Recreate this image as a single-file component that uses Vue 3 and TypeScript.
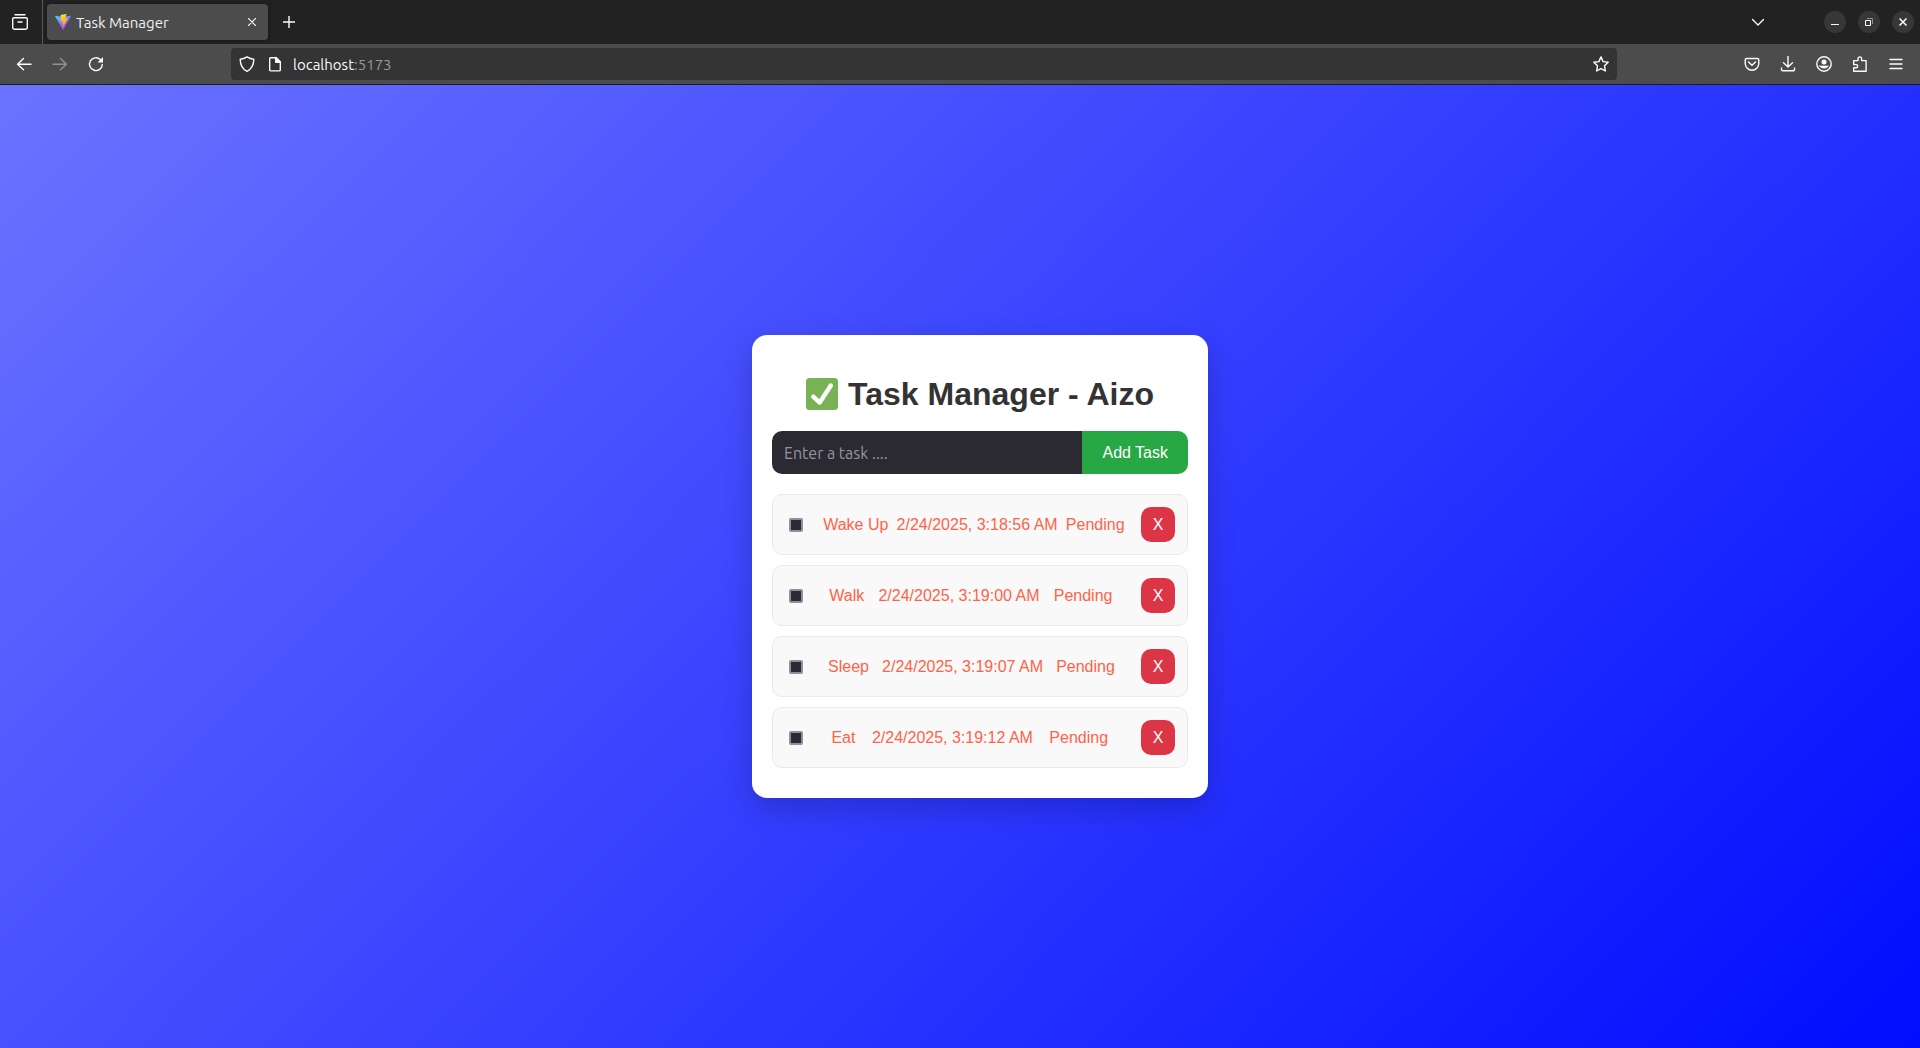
<script setup lang="ts">
import { ref } from 'vue'

interface Task {
  id: number
  text: string
  time: string
  done: boolean
}

const draft = ref('')
const tasks = ref<Task[]>([
  { id: 1, text: 'Wake Up', time: '2/24/2025, 3:18:56 AM', done: false },
  { id: 2, text: 'Walk', time: '2/24/2025, 3:19:00 AM', done: false },
  { id: 3, text: 'Sleep', time: '2/24/2025, 3:19:07 AM', done: false },
  { id: 4, text: 'Eat', time: '2/24/2025, 3:19:12 AM', done: false },
])

function addTask(): void {
  const text = draft.value.trim()
  if (!text) return
  tasks.value.push({ id: Date.now(), text, time: new Date().toLocaleString('en-US'), done: false })
  draft.value = ''
}

function removeTask(id: number): void {
  tasks.value = tasks.value.filter((task) => task.id !== id)
}
</script>

<template>
  <div class="window">
    <header class="chrome">
      <div class="tabs">
        <button class="view" type="button" aria-label="Recent browsing">
          <svg class="icon" viewBox="0 0 16 16">
            <path d="M3 .8h10" />
            <path d="M2 3.7h12a1.3 1.3 0 0 1 1.3 1.3v8.5a1.8 1.8 0 0 1-1.8 1.8h-11A1.8 1.8 0 0 1 .7 13.500V5A1.300 1.300 0 0 1 2 3.700z" />
            <path d="M6 8h4" />
          </svg>
        </button>
        <div class="tab">
          <svg class="icon" viewBox="0 0 32 32" aria-hidden="true">
            <defs>
              <linearGradient id="body" x1="0" y1="0" x2=".6" y2="1">
                <stop offset="0" stop-color="#41d1ff" />
                <stop offset="1" stop-color="#bd34fe" />
              </linearGradient>
              <linearGradient id="bolt" x1=".4" y1="0" x2=".6" y2="1">
                <stop offset="0" stop-color="#ffea83" />
                <stop offset=".2" stop-color="#ffc820" />
                <stop offset="1" stop-color="#ffa800" />
              </linearGradient>
            </defs>
            <path fill="url(#body)" stroke="none" d="M31.400 4.800 16.800 31a.9.9 0 0 1-1.500 0L.4 4.800a.9.9 0 0 1 .9-1.300L16 6.200l14.500-2.700a.9.9 0 0 1 .9 1.300z" />
            <path fill="url(#bolt)" stroke="none" d="m22.600.1-10.800 2.100a.4.400 0 0 0-.3.400l-.700 11.200c0 .3.200.5.500.4l3-.7c.3 0 .5.200.5.500l-.9 4.400c-.1.300.2.500.5.500l1.800-.6c.3-.1.600.2.500.5l-1.400 6.900c-.1.400.5.700.7.300l9-17.600c.1-.300-.1-.7-.4-.6l-3.200.6a.4.400 0 0 1-.5-.5l2.100-7.300a.4.400 0 0 0-.4-.5z" />
          </svg>
          <span class="tab-title">Task Manager</span>
          <button class="close" type="button" aria-label="Close tab">
            <svg viewBox="0 0 8 8"><path d="m.3.300 7.400 7.400M7.700.3.300 7.700" /></svg>
          </button>
        </div>
        <button class="tool" type="button" aria-label="New tab">
          <svg class="plus" viewBox="0 0 12 12"><path d="M6 0v12M0 6h12" /></svg>
        </button>
        <button class="tool all-tabs" type="button" aria-label="List all tabs">
          <svg class="plus" viewBox="0 0 12 12"><path d="m.5 3.500 5.500 5.500 5.500-5.500" /></svg>
        </button>
        <div class="controls">
          <button type="button" aria-label="Minimize">
            <svg class="glyph" viewBox="0 0 10 10"><path d="M1 7.500h8" /></svg>
          </button>
          <button type="button" aria-label="Restore">
            <svg class="glyph" viewBox="0 0 10 10">
              <path d="M1.500 3.500h5v5h-5z" />
              <path stroke="#8d8d8d" stroke-width="1" d="M3 1.500h5.500V7" />
            </svg>
          </button>
          <button type="button" aria-label="Close">
            <svg class="glyph" viewBox="0 0 10 10"><path stroke-width="1.500" d="m1.500 1.500 7 7M8.500 1.500l-7 7" /></svg>
          </button>
        </div>
      </div>
      <div class="toolbar">
        <button class="tool" type="button" aria-label="Back">
          <svg class="icon" viewBox="0 0 16 16"><path d="M15 8.300H1.500M7.500 2.500 1.600 8.300l5.900 5.500" /></svg>
        </button>
        <button class="tool" type="button" aria-label="Forward" disabled>
          <svg class="icon" viewBox="0 0 16 16"><path d="M1 8.300h13.500M8.500 2.500l5.900 5.800-5.900 5.500" /></svg>
        </button>
        <button class="tool" type="button" aria-label="Reload">
          <svg class="icon" viewBox="0 0 16 16">
            <path d="M14.300 8.500A6.400 6.400 0 1 1 12.300 3.500l1 1" />
            <path d="M15 1v5.500H9.500z" fill="currentColor" stroke="none" />
          </svg>
        </button>
        <div class="urlbar">
          <svg class="icon" viewBox="0 0 16 16" aria-hidden="true">
            <path d="M8 .8c2.200 1.400 4.400 2.200 6.800 2.500-.1 5.500-1.800 9.700-6.800 12C3 13 1.300 8.800 1.200 3.300 3.600 3 5.800 2.200 8 .8z" />
          </svg>
          <svg class="icon" viewBox="0 0 16 16" aria-hidden="true">
            <path d="M3.500 1.700h5.800l4 4v8.200a1 1 0 0 1-1 1H3.700a1 1 0 0 1-1-1V2.500a.8.800 0 0 1 .8-.8z" />
            <path d="M8.700 1.500v4.800h4.800z" fill="currentColor" />
          </svg>
          <span class="address">localhost<span class="port">:5173</span></span>
          <button class="star" type="button" aria-label="Bookmark this page">
            <svg class="icon" viewBox="0 0 16 16"><path d="m8 .9 2.100 4.700 5.100.6-3.700 3.600.9 5.200L8 12.600 3.600 15l.9-5.200L.8 6.200l5.100-.6z" /></svg>
          </button>
        </div>
        <button class="tool" type="button" aria-label="Pocket">
          <svg class="icon" viewBox="0 0 16 16">
            <path d="M2.700 2.500h10.600a1.500 1.500 0 0 1 1.500 1.500v3.500a6.800 6.800 0 0 1-13.600 0V4a1.500 1.500 0 0 1 1.500-1.500z" />
            <path d="m4.500 6 3.500 3.300L11.500 6" />
          </svg>
        </button>
        <button class="tool" type="button" aria-label="Downloads">
          <svg class="icon" viewBox="0 0 16 16"><path d="M8 0v11M3.500 6.700 8 11l4.500-4.300M1.500 12v1.500a1.300 1.300 0 0 0 1.300 1.300h10.400a1.300 1.300 0 0 0 1.300-1.300V12" /></svg>
        </button>
        <button class="tool" type="button" aria-label="Account">
          <svg class="icon" viewBox="0 0 16 16">
            <circle cx="8" cy="8" r="7.200" />
            <circle cx="8" cy="6" r="2.500" fill="currentColor" stroke="none" />
            <path d="M3.500 10h9a5.500 5.500 0 0 1-9 0z" fill="currentColor" stroke-width=".6" />
          </svg>
        </button>
        <button class="tool" type="button" aria-label="Extensions">
          <svg class="icon" viewBox="0 0 16 16">
            <path d="M1.700 7.500V4.600h4.300V2.700a1.800 1.800 0 0 1 3.600 0v1.900h4.500v10.600H1.700v-3.400h2.400a1.500 1.500 0 0 0 0-3.200H1.700z" />
          </svg>
        </button>
        <button class="tool" type="button" aria-label="Menu">
          <svg class="icon menu" viewBox="0 0 16 16"><path d="M2 3.500h12M2 8h12M2 12.500h12" /></svg>
        </button>
      </div>
    </header>

    <main class="page">
      <section class="card">
        <h1>
          <svg class="check" viewBox="0 0 36 36" role="img" aria-label="Done">
            <rect width="36" height="36" rx="4" fill="#77b255" />
            <path fill="#fff" d="M29.280 6.362a2.502 2.502 0 0 0-3.458.736L14.936 23.877l-5.029-4.650a2.500 2.500 0 1 0-3.394 3.671l7.209 6.666c.480.445 1.090.665 1.696.665.673 0 1.534-.282 2.099-1.139.332-.506 12.500-19.270 12.500-19.270a2.500 2.500 0 0 0-.737-3.458z" />
          </svg>
          <span>Task Manager - Aizo</span>
        </h1>
        <form class="entry" @submit.prevent="addTask">
          <input v-model="draft" type="text" placeholder="Enter a task ...." aria-label="Enter a task" />
          <button type="submit">Add Task</button>
        </form>
        <ul class="list">
          <li v-for="task in tasks" :key="task.id" class="item">
            <input :id="`task-${task.id}`" v-model="task.done" type="checkbox" />
            <label :for="`task-${task.id}`" class="details">
              <span>{{ task.text }}</span>
              <span>{{ task.time }}</span>
              <span>{{ task.done ? 'Completed' : 'Pending' }}</span>
            </label>
            <button type="button" :aria-label="`Delete ${task.text}`" @click="removeTask(task.id)">X</button>
          </li>
        </ul>
      </section>
    </main>
  </div>
</template>

<style>
body {
  margin: 0;
}
</style>

<style scoped>
.window {
  display: flex;
  flex-direction: column;
  min-height: 100vh;
  font-family: "Liberation Sans", Arial, sans-serif;
  font-size: 16px;
}

button {
  border: 0;
  padding: 0;
  background: none;
  color: inherit;
  font: inherit;
}

.chrome {
  color: #fbfbfb;
  font-family: Ubuntu, "Noto Sans", sans-serif;
  font-size: 15px;
  border-bottom: 1px solid #1c1c1c;
}

.chrome svg {
  display: block;
  flex: none;
  fill: none;
  stroke: currentColor;
  stroke-width: 1.4;
  stroke-linecap: round;
  stroke-linejoin: round;
}

.chrome .icon {
  width: 16px;
  height: 16px;
}

.tabs {
  display: flex;
  align-items: center;
  height: 44px;
  padding-right: 6px;
  background: #222;
}

.view {
  display: grid;
  place-items: center;
  width: 43px;
  height: 44px;
  padding-right: 2px;
  border-right: 1px solid #595959;
}

.tab {
  display: flex;
  align-items: center;
  gap: 5px;
  box-sizing: border-box;
  width: 221px;
  height: 36px;
  margin-left: 4px;
  padding: 0 4px 0 8px;
  border-radius: 4px;
  background: #4c4c4c;
  box-shadow: 0 0 4px rgba(0, 0, 0, 0.4);
}

.tab-title {
  flex: 1;
  color: #f0f0f0;
}

.close {
  display: grid;
  place-items: center;
  width: 24px;
  height: 24px;
}

.close svg {
  width: 8px;
  height: 8px;
  stroke-width: 1.1;
}

.tool {
  display: grid;
  flex: none;
  place-items: center;
  width: 36px;
  height: 36px;
}

.tool:disabled {
  opacity: 0.4;
}

.tabs .tool {
  margin-left: 3px;
}

.plus {
  width: 12px;
  height: 12px;
}

.tabs .all-tabs {
  margin-left: auto;
  margin-right: 48px;
}

.controls {
  display: flex;
  gap: 12px;
}

.controls button {
  display: grid;
  place-items: center;
  width: 22px;
  height: 22px;
  border-radius: 50%;
  background: #373737;
}

.controls .glyph {
  width: 10px;
  height: 10px;
  stroke-linecap: butt;
  stroke-linejoin: miter;
  stroke-width: 1;
}

.toolbar {
  display: flex;
  align-items: center;
  height: 40px;
  padding: 0 6px;
  background: #4c4c4c;
}

.urlbar {
  display: flex;
  flex: 1;
  align-items: center;
  gap: 12px;
  height: 32px;
  margin: 0 117px;
  padding: 0 8px;
  border-radius: 4px;
  background: #343434;
}

.address {
  flex: 1;
  margin-left: -2px;
}

.port {
  color: #999;
}

.page {
  display: flex;
  flex: 1;
  align-items: center;
  justify-content: center;
  padding-left: 40px;
  background: linear-gradient(135deg, #6b73ff 0%, #000dff 100%);
}

.card {
  box-sizing: border-box;
  width: 456px;
  padding: 41px 20px 30px;
  border-radius: 15px;
  background: #fff;
  box-shadow: 0 10px 30px rgba(0, 0, 0, 0.2);
}

h1 {
  display: flex;
  align-items: center;
  justify-content: center;
  gap: 10px;
  margin: 0 0 19px;
  color: #333;
  font-size: 32px;
  line-height: 36px;
}

.check {
  width: 32px;
  height: 32px;
}

.entry {
  display: flex;
  height: 43px;
  margin-bottom: 20px;
}

.entry input {
  flex: 1;
  min-width: 0;
  padding: 0 12px;
  border: 0;
  border-radius: 10px 0 0 10px;
  background: #2b2a33;
  color: #fbfbfe;
  font-family: Ubuntu, "Noto Sans", sans-serif;
  font-size: 16px;
}

.entry input::placeholder {
  color: #95959a;
  opacity: 1;
}

.entry button {
  padding: 0 20px;
  border-radius: 0 10px 10px 0;
  background: #28a745;
  color: #fff;
}

.list {
  display: flex;
  flex-direction: column;
  gap: 10px;
  margin: 0;
  padding: 0;
  list-style: none;
}

.item {
  display: flex;
  align-items: center;
  padding: 12px;
  border: 1px solid #eaeaea;
  border-radius: 10px;
  background: #f9f9f9;
}

.item input {
  appearance: none;
  box-sizing: border-box;
  flex: none;
  width: 14px;
  height: 14px;
  margin: 0 12px 0 4px;
  border: 2px solid #8f8f9d;
  border-radius: 2px;
  background: #2b2a33;
}

.item input:checked {
  background: #00ddff;
}

.details {
  display: flex;
  flex: 1;
  justify-content: space-evenly;
  color: #ff6347;
  white-space: nowrap;
}

/* Trailing slot keeps a double gap before the delete button. */
.details::after {
  content: "";
}

.item button {
  width: 34px;
  height: 35px;
  border-radius: 10px;
  background: #dc3545;
  color: #fff;
}
</style>
